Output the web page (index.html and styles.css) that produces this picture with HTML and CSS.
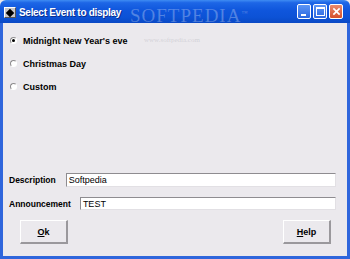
FILE: index.html
```html
<!DOCTYPE html>
<html lang="en">
<head>
<meta charset="utf-8"/>
<meta content="width=device-width, initial-scale=1.0" name="viewport"/>
<title>Select Event to display</title>
<link rel="stylesheet" href="styles.css">
</head>
<body>
<div class="window">
  <div class="titlebar">
    <div class="app-icon"><span class="app-blob"></span></div>
    <div class="title">Select Event to display</div>
    <div class="controls">
      <div class="ctl ctl-min"><span class="min-bar"></span></div>
      <div class="ctl ctl-max"><span class="max-box"></span></div>
      <div class="ctl ctl-close">
        <svg viewBox="0 0 10 10" width="9" height="9">
          <path d="M1.5 1.5 L8.5 8.5 M8.5 1.5 L1.5 8.5" stroke="#fff" stroke-width="1.8" fill="none"></path>
        </svg>
      </div>
    </div>
  </div>
  <div class="watermark">SOFTPEDIA<sup>™</sup></div>
  <div class="watermark-url">www.softpedia.com</div>

  <div class="client">
    <div class="options">
      <label class="option"><span class="radio checked"></span>Midnight New Year's eve</label>
      <label class="option"><span class="radio"></span>Christmas Day</label>
      <label class="option"><span class="radio"></span>Custom</label>
    </div>

    <div class="fields">
      <div class="field">
        <span class="field-label">Description</span>
        <div class="textbox">Softpedia</div>
      </div>
      <div class="field field-second">
        <span class="field-label">Announcement</span>
        <div class="textbox">TEST</div>
      </div>
    </div>

    <div class="actions">
      <div class="btn"><u>O</u>k</div>
      <div class="btn"><u>H</u>elp</div>
    </div>
  </div>
</div>
</body>
</html>
```
FILE: styles.css
```css
html, body {
  margin: 0;
  padding: 0;
  width: 350px;
  height: 259px;
  overflow: hidden;
}

body {
  font-family: 'Liberation Sans', Arial, sans-serif;
  background: #ebe9ed;
}

.window {
  position: relative;
  width: 350px;
  height: 259px;
  display: flex;
  flex-direction: column;
}

.titlebar {
  height: 23px;
  display: flex;
  align-items: center;
  background: linear-gradient(180deg, #3f8cf3 0%, #1d66e6 12%, #0f56dc 45%, #0c52d6 75%, #0a49c4 100%);
  border-radius: 6px 6px 0 0;
  padding: 0 7px 0 4px;
}

.app-icon {
  width: 12px;
  height: 11px;
  background: #c9c7c9;
  border-top: 1px solid #fff;
  border-left: 1px solid #fff;
  border-right: 1px solid #555;
  border-bottom: 1px solid #555;
  box-sizing: border-box;
  display: flex;
  align-items: center;
  justify-content: center;
  margin-top: 2px;
}

.app-blob {
  width: 6px;
  height: 6px;
  background: #000;
  transform: rotate(45deg);
}

.title {
  margin-left: 3px;
  color: #fff;
  font-family: 'Liberation Sans', Arial, sans-serif;
  font-weight: bold;
  font-size: 10px;
  letter-spacing: -0.3px;
  text-shadow: 1px 1px 0 #0a2f8e;
  flex: 1;
  margin-top: 2px;
}

.controls {
  display: flex;
  gap: 2px;
}

.ctl {
  width: 14px;
  height: 15px;
  box-sizing: border-box;
  border: 1px solid #fff;
  border-radius: 2px;
  display: flex;
  align-items: center;
  justify-content: center;
  background: linear-gradient(180deg, #5d96f5, #2a67e0);
}

.min-bar {
  width: 5px;
  height: 2px;
  background: #fff;
  margin-top: 6px;
  margin-right: 2px;
}

.max-box {
  width: 7px;
  height: 6px;
  border: 1px solid #fff;
  border-top-width: 2px;
}

.ctl-close {
  background: linear-gradient(180deg, #e98a6d, #d5502a);
}

.watermark {
  position: absolute;
  left: 130px;
  top: 5px;
  font-family: 'Liberation Serif', serif;
  font-size: 19px;
  letter-spacing: 1px;
  color: rgba(255, 255, 255, 0.28);
  pointer-events: none;
}

.watermark sup {
  font-size: 6px;
}

.watermark-url {
  position: absolute;
  left: 144px;
  top: 36px;
  font-family: 'Liberation Serif', serif;
  font-size: 7px;
  color: rgba(160, 160, 170, 0.35);
}

.client {
  flex: 1;
  display: flex;
  flex-direction: column;
  border-left: 3px solid #2f66dc;
  border-right: 3px solid #2f66dc;
  border-bottom: 3px solid #2f66dc;
  background: #ebe9ed;
}

.options {
  padding: 6px 0 0 7px;
  display: flex;
  flex-direction: column;
}

.option {
  height: 23px;
  display: flex;
  align-items: center;
  font-size: 9px;
  font-weight: bold;
  color: #000;
}

.radio {
  width: 7px;
  height: 7px;
  box-sizing: border-box;
  border-radius: 50%;
  border: 1px solid #8c8a8c;
  border-right-color: #fff;
  border-bottom-color: #fff;
  background: #fff;
  margin-right: 6px;
  position: relative;
}

.radio.checked::after {
  content: "";
  position: absolute;
  left: 1px;
  top: 1px;
  width: 3px;
  height: 3px;
  border-radius: 50%;
  background: #000;
}

.fields {
  margin-top: auto;
  padding: 0 11px 0 6px;
  display: flex;
  flex-direction: column;
  gap: 10px;
}

.field {
  display: flex;
  align-items: center;
  gap: 10px;
  height: 14px;
}

.field-second {
  height: 13px;
  gap: 9px;
}

.field-label {
  font-size: 8.5px;
  font-weight: bold;
  color: #000;
}

.textbox {
  flex: 1;
  height: 100%;
  box-sizing: border-box;
  background: #fff;
  border-top: 1px solid #8e8c90;
  border-left: 1px solid #8e8c90;
  border-right: 1px solid #e2e0e4;
  border-bottom: 1px solid #e2e0e4;
  font-size: 9px;
  line-height: 12px;
  padding-left: 2px;
  color: #000;
}

.actions {
  display: flex;
  justify-content: space-between;
  padding: 0 16px 0 17px;
  margin-top: 10px;
  margin-bottom: 12px;
}

.btn {
  width: 48px;
  height: 24px;
  box-sizing: border-box;
  border-top: 1px solid #fff;
  border-left: 1px solid #fff;
  border-right: 2px solid #9a989c;
  border-bottom: 2px solid #9a989c;
  display: flex;
  align-items: center;
  justify-content: center;
  font-size: 9px;
  font-weight: bold;
  color: #000;
}
```
